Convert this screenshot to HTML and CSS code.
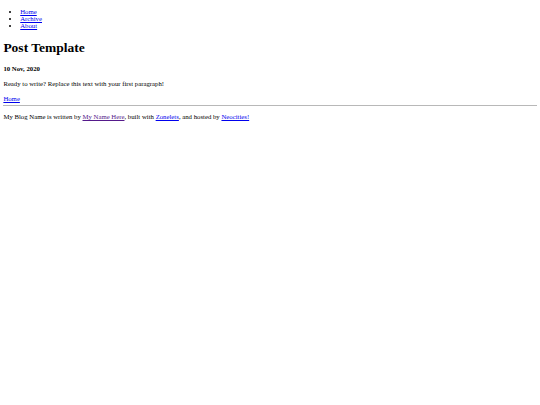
FILE: index.html
```html
<!DOCTYPE html>
<html lang="en">
<head>
<meta charset="utf-8">
<title>Post Template</title>
<link rel="stylesheet" href="styles.css">
</head>
<body>
<nav class="site-nav">
  <ul class="nav-list">
    <li><a href="#">Home</a></li>
    <li><a href="#">Archive</a></li>
    <li><a href="#">About</a></li>
  </ul>
</nav>
<main class="post">
  <h1 class="post-title">Post Template</h1>
  <h4 class="post-date">10 Nov, 2020</h4>
  <p class="post-body">Ready to write? Replace this text with your first paragraph!</p>
  <p class="post-back"><a href="#">Home</a></p>
</main>
<hr class="rule">
<footer class="site-footer">
  <p class="footer-text">My Blog Name is written by <a class="visited" href="#">My Name Here</a>, built with <a href="#">Zonelets</a>, and hosted by <a href="#">Neocities!</a></p>
</footer>
</body>
</html>
```

FILE: styles.css
```css
html, body {
  background: #ffffff;
}
body {
  margin: 3.375px;
  font-family: "Liberation Serif", "Times New Roman", serif;
  font-size: 6.75px;
  color: #000000;
}
a {
  color: #0000ee;
}
a.visited {
  color: #551a8b;
}
.nav-list {
  margin: 4.75px 0 0;
  padding-left: 2.5em;
}
.post-title {
  font-size: 2em;
  margin: 11px 0 9px;
}
.post-date {
  font-size: 1em;
  margin: 6.5px 0 8px;
}
.post-body,
.footer-text {
  margin: 1em 0;
}
.post-back {
  margin: 8.25px 0 3px;
}
.rule {
  margin: 2px 0 3.375px;
  border: 0;
  border-top: 1px solid #b8b8b8;
  height: 0;
}
```
